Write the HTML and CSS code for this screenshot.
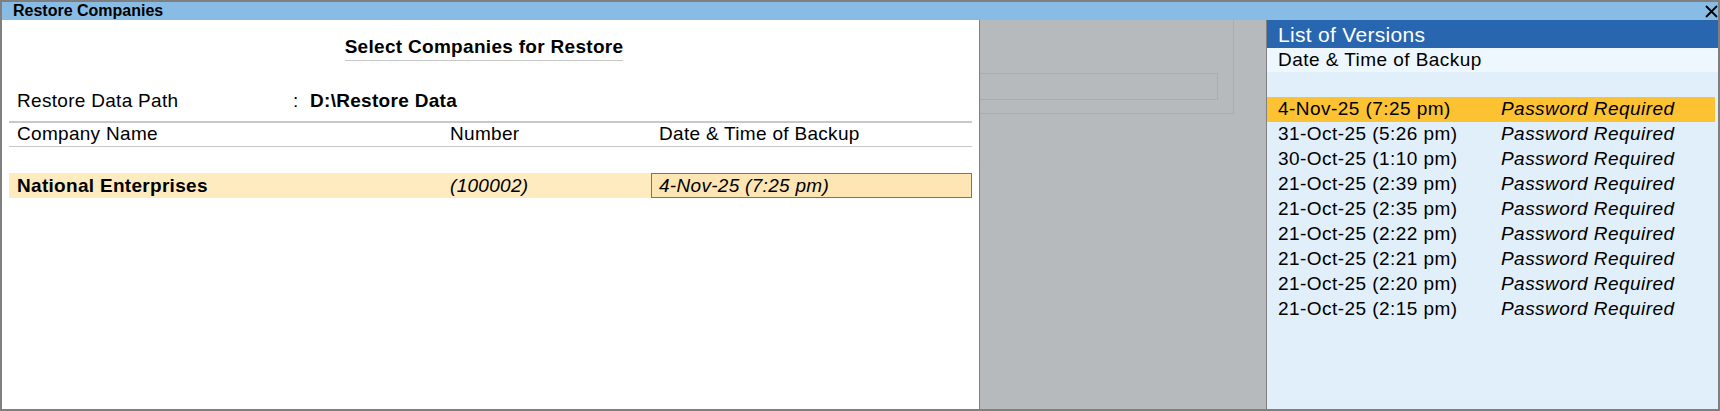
FILE: index.html
```html
<!DOCTYPE html>
<html lang="en">
<head>
    <meta charset="UTF-8">
    <title>Restore Companies</title>
    <link rel="stylesheet" href="styles.css">
</head>
<body>
    <div class="window">
        <div class="title-bar">
            <span class="title-text">Restore Companies</span>
            <svg class="close-icon" width="13" height="13" viewBox="0 0 13 13">
                <path d="M1 1 L12 12 M12 1 L1 12" stroke="#000" stroke-width="1.8" fill="none"/>
            </svg>
        </div>

        <div class="window-body">
            <div class="restore-panel">
                <div class="select-title"><span>Select Companies for Restore</span></div>

                <div class="path-row">
                    <span class="path-label">Restore Data Path</span>
                    <span class="path-colon">:</span>
                    <span class="path-value">D:\Restore Data</span>
                </div>

                <div class="company-head">
                    <span class="col-name">Company Name</span>
                    <span class="col-number">Number</span>
                    <span class="col-date">Date &amp; Time of Backup</span>
                </div>

                <div class="company-row">
                    <span class="col-name">National Enterprises</span>
                    <span class="col-number">(100002)</span>
                    <span class="col-date date-field">4-Nov-25 (7:25 pm)</span>
                </div>
            </div>

            <div class="backdrop">
                <div class="ghost-frame">
                    <div class="ghost-box"></div>
                </div>
            </div>

            <div class="versions-panel">
                <div class="versions-title">List of Versions</div>
                <div class="versions-sub">Date &amp; Time of Backup</div>
                <div class="versions-list">
                    <div class="version-row selected"><span>4-Nov-25 (7:25 pm)</span><em>Password Required</em></div>
                    <div class="version-row"><span>31-Oct-25 (5:26 pm)</span><em>Password Required</em></div>
                    <div class="version-row"><span>30-Oct-25 (1:10 pm)</span><em>Password Required</em></div>
                    <div class="version-row"><span>21-Oct-25 (2:39 pm)</span><em>Password Required</em></div>
                    <div class="version-row"><span>21-Oct-25 (2:35 pm)</span><em>Password Required</em></div>
                    <div class="version-row"><span>21-Oct-25 (2:22 pm)</span><em>Password Required</em></div>
                    <div class="version-row"><span>21-Oct-25 (2:21 pm)</span><em>Password Required</em></div>
                    <div class="version-row"><span>21-Oct-25 (2:20 pm)</span><em>Password Required</em></div>
                    <div class="version-row"><span>21-Oct-25 (2:15 pm)</span><em>Password Required</em></div>
                </div>
            </div>
        </div>
    </div>
</body>
</html>
```

FILE: styles.css
```css
:root {
    --frame: #7f7f7f;
    --title-blue: #88bce4;
    --list-blue: #2966b0;
    --list-bg: #e1effa;
    --list-sub: #eef7fd;
    --pick: #fdc232;
    --row-pick: #feebc0;
    --rule: #c8c8c8;
}

* {
    margin: 0;
    padding: 0;
    box-sizing: border-box;
}

body {
    width: 1720px;
    height: 411px;
    overflow: hidden;
    font-family: "Liberation Sans", Arial, sans-serif;
    font-size: 19px;
    letter-spacing: 0.3px;
    color: #000;
    background: #fff;
}

.window {
    width: 1720px;
    height: 411px;
    border: 2px solid var(--frame);
    display: flex;
    flex-direction: column;
}

.title-bar {
    height: 18px;
    flex: none;
    background: var(--title-blue);
    display: flex;
    align-items: center;
    justify-content: space-between;
    padding-left: 11px;
}

.title-text {
    font-size: 16px;
    font-weight: bold;
    letter-spacing: 0;
    line-height: 18px;
}

.close-icon {
    margin-right: 0;
}

.window-body {
    flex: 1;
    display: flex;
    min-height: 0;
}

/* left: company list */
.restore-panel {
    width: 977px;
    flex: none;
    background: #fff;
    padding: 0 7px;
}

.select-title {
    padding-top: 16px;
    padding-right: 13px;
    text-align: center;
}

.select-title span {
    display: inline-block;
    font-weight: bold;
    line-height: 20px;
    padding-bottom: 3px;
    border-bottom: 1px solid var(--rule);
}

.path-row {
    display: flex;
    margin-top: 30px;
    line-height: 20px;
    padding: 0 8px 10px;
    border-bottom: 2px solid var(--rule);
}

.path-label {
    width: 276px;
}

.path-colon {
    width: 17px;
}

.path-value {
    font-weight: bold;
}

.company-head,
.company-row {
    display: flex;
    padding-left: 8px;
}

.company-head {
    line-height: 20px;
    padding-top: 1px;
    padding-bottom: 2px;
    border-bottom: 1px solid var(--rule);
}

.company-head .col-date {
    padding-left: 8px;
}

.company-row {
    margin-top: 26px;
    height: 25px;
    line-height: 25px;
    background: var(--row-pick);
}

.col-name {
    width: 433px;
}

.col-number {
    width: 201px;
}

.col-date {
    flex: 1;
}

.company-row .col-name {
    font-weight: bold;
}

.company-row .col-number {
    font-style: italic;
}

.date-field {
    font-style: italic;
    padding-left: 7px;
    line-height: 23px;
    background: #fde6b4;
    border: 1px solid #2a8bc6;
}

/* middle: dimmed background screen */
.backdrop {
    width: 288px;
    flex: none;
    background: #b6babd;
    border-left: 1px solid #808080;
    border-right: 1px solid #808080;
}

.ghost-frame {
    width: 254px;
    height: 94px;
    border-right: 1px solid #a6aeb4;
    border-bottom: 1px solid #a6aeb4;
    padding-top: 53px;
}

.ghost-box {
    width: 238px;
    height: 27px;
    border: 1px solid #a6aeb4;
    border-left: none;
}

/* right: versions */
.versions-panel {
    width: 451px;
    flex: none;
    background: var(--list-bg);
    letter-spacing: 0.45px;
}

.versions-title {
    height: 28px;
    padding: 1px 0 0 11px;
    font-size: 21px;
    letter-spacing: 0.3px;
    line-height: 27px;
    color: #fff;
    background: var(--list-blue);
}

.versions-sub {
    height: 24px;
    line-height: 24px;
    padding-left: 11px;
    background: var(--list-sub);
}

.versions-list {
    padding-top: 25px;
    padding-right: 3px;
}

.version-row {
    display: flex;
    height: 25px;
    line-height: 24px;
    padding-left: 11px;
}

.version-row span {
    width: 223px;
}

.version-row em {
    font-style: italic;
}

.version-row.selected {
    background: var(--pick);
}
```
